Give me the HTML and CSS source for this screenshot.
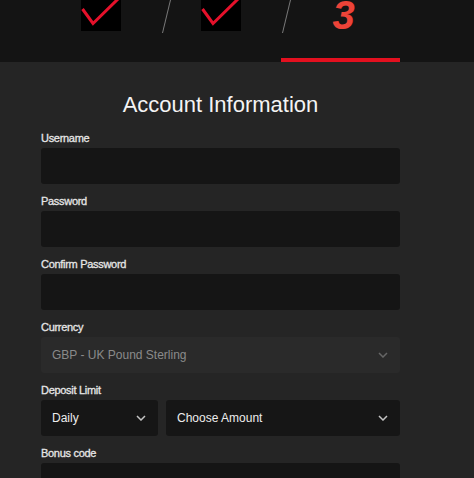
FILE: index.html
```html
<!DOCTYPE html>
<html lang="en">
<head>
<meta charset="utf-8">
<title>Account Information</title>
<link rel="stylesheet" href="styles.css">
</head>
<body>
<header class="steps">
  <div class="steps-inner">
    <div class="step done">
      <span class="checkbox">
        <svg width="40" height="31" viewBox="0 0 40 31"><polyline points="1.5,9 12,23.5 38,-2" fill="none" stroke="#e5112b" stroke-width="3"/></svg>
      </span>
    </div>
    <div class="step done sep">
      <span class="checkbox">
        <svg width="40" height="31" viewBox="0 0 40 31"><polyline points="1.5,9 12,23.5 38,-2" fill="none" stroke="#e5112b" stroke-width="3"/></svg>
      </span>
    </div>
    <div class="step current sep">
      <span class="num">3</span>
    </div>
  </div>
</header>
<main class="form">
  <h1 class="title">Account Information</h1>
  <div class="field">
    <label class="label">Username</label>
    <input class="input" type="text">
  </div>
  <div class="field">
    <label class="label">Password</label>
    <input class="input" type="password">
  </div>
  <div class="field">
    <label class="label">Confirm Password</label>
    <input class="input" type="password">
  </div>
  <div class="field">
    <label class="label">Currency</label>
    <div class="select disabled">
      <span>GBP - UK Pound Sterling</span>
      <svg class="chev" width="10" height="6" viewBox="0 0 10 6"><polyline points="1,1 5,5 9,1" fill="none" stroke="currentColor" stroke-width="1.5"/></svg>
    </div>
  </div>
  <div class="field">
    <label class="label">Deposit Limit</label>
    <div class="row">
      <div class="select">
        <span>Daily</span>
        <svg class="chev" width="10" height="6" viewBox="0 0 10 6"><polyline points="1,1 5,5 9,1" fill="none" stroke="currentColor" stroke-width="1.5"/></svg>
      </div>
      <div class="select">
        <span>Choose Amount</span>
        <svg class="chev" width="10" height="6" viewBox="0 0 10 6"><polyline points="1,1 5,5 9,1" fill="none" stroke="currentColor" stroke-width="1.5"/></svg>
      </div>
    </div>
  </div>
  <div class="field">
    <label class="label">Bonus code</label>
    <input class="input" type="text">
  </div>
</main>
</body>
</html>
```
FILE: styles.css
```css
* { box-sizing: border-box; }
html, body { margin: 0; padding: 0; }
body {
  background: #252525;
  font-family: "Liberation Sans", Arial, sans-serif;
  color: #eeeeee;
  overflow: hidden;
}
.steps {
  background: #141414;
  height: 62px;
}
.steps-inner {
  margin-left: 41px;
  width: 359px;
  height: 62px;
  display: grid;
  grid-template-columns: 120px 120px 119px;
}
.step {
  position: relative;
  display: flex;
  justify-content: center;
  align-items: flex-start;
  height: 62px;
  overflow: hidden;
}
.sep::before {
  content: "";
  position: absolute;
  left: 1px;
  top: 0;
  width: 1px;
  height: 33px;
  background: #7a7a7a;
  transform-origin: bottom left;
  transform: skewX(-13.6deg);
}
.checkbox {
  display: block;
  width: 40px;
  height: 31px;
  background: #000;
}
.checkbox svg { display: block; }
.step.current {
  border-bottom: 4px solid #e3101f;
}
.num {
  display: block;
  margin-left: 6px;
  font-size: 40px;
  line-height: 30px;
  font-weight: bold;
  font-style: italic;
  color: #ec4338;
}
.form {
  margin-left: 41px;
  width: 359px;
  padding-top: 30px;
}
.title {
  margin: 0 0 13px;
  text-align: center;
  font-size: 22px;
  line-height: 26px;
  font-weight: normal;
  color: #f4f4f4;
}
.field {
  display: flex;
  flex-direction: column;
  margin-bottom: 10px;
}
.label {
  display: block;
  font-size: 11px;
  line-height: 14px;
  height: 14px;
  margin-bottom: 3px;
  letter-spacing: -0.3px;
  color: #e6e6e6;
  -webkit-text-stroke: 0.3px #e6e6e6;
}
.input {
  display: block;
  width: 100%;
  height: 36px;
  border: none;
  border-radius: 3px;
  background: #151515;
  outline: none;
  padding: 0 11px;
  color: #eee;
  font-family: inherit;
}
.select {
  height: 36px;
  border-radius: 3px;
  background: #161616;
  display: flex;
  align-items: center;
  justify-content: space-between;
  padding: 0 12px 0 11px;
  font-size: 12px;
  color: #ededed;
}
.select .chev { color: #c4c4c4; display: block; }
.select.disabled {
  background: #2a2a2a;
  color: #8a8a8a;
}
.select.disabled .chev { color: #666; }
.row {
  display: grid;
  grid-template-columns: 1fr 2fr;
  gap: 8px;
}
```
